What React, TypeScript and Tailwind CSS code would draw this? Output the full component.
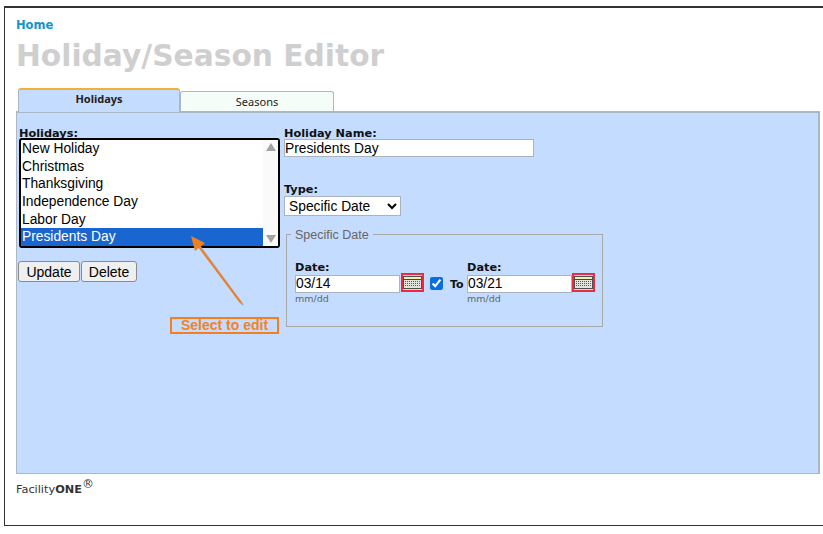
import React from 'react';

const holidays = ['New Holiday', 'Christmas', 'Thanksgiving', 'Independence Day', 'Labor Day', 'Presidents Day'];

const CalendarIcon = () => (
  <div className="w-[23px] h-[19px] border-2 border-[#ee2b3c] flex items-center justify-center shrink-0">
    <svg width="19" height="13" viewBox="0 0 19 13">
      <rect x="0.5" y="0.5" width="18" height="12" fill="#e4e4df" stroke="#4a4f4f" />
      <rect x="1" y="1" width="17" height="2" fill="#f3eeb4" />
      <rect x="1" y="3" width="17" height="1" fill="#3f4444" />
      {[5, 7, 9].map((y) =>
        [2, 4, 6, 8, 10, 12, 14, 16].map((x) => (
          <rect key={`${x}-${y}`} x={x} y={y} width="1" height="1" fill={x === 16 ? '#e33' : '#555'} />
        ))
      )}
    </svg>
  </div>
);

const DateField = ({ value }: { value: string }) => (
  <div className="flex flex-col">
    <label className="font-['DejaVu_Sans'] font-bold text-[11.3px] leading-[13px] text-[#111]">Date:</label>
    <div className="flex items-center h-[19px]">
      <input
        readOnly
        value={value}
        className="w-[105px] h-[18px] pt-px bg-white border border-[#a9b4c0] text-[13.8px] font-['Liberation_Sans'] text-black outline-none px-0"
      />
    </div>
    <span className="font-['DejaVu_Sans'] text-[9.5px] leading-[11px] text-[#666]">mm/dd</span>
  </div>
);

export default function App() {
  return (
    <div className="w-[823px] h-[534px] overflow-hidden bg-white pt-[6px] pl-[4px]">
      <div className="relative h-[520px] border-t-2 border-l border-b border-[#333] pl-[11px] pt-[11px] font-['DejaVu_Sans']">
        <a className="block font-bold text-[11.5px] leading-[13px] text-[#1296c8]">Home</a>
        <h1 className="mt-[5px] font-bold text-[29.7px] leading-[38px] text-[#cfcfcf] whitespace-nowrap">Holiday/Season Editor</h1>

        <div className="flex items-end h-[24px] mt-[12px] ml-[2px]">
          <div className="w-[162px] h-[24px] -mb-px z-10 bg-[#c4dcff] border-t-2 border-x border-t-[#f5ad3c] border-x-[#a9b8c4] rounded-t-[3px] text-center font-['Noto_Sans'] font-bold text-[11px] leading-[18px] text-[#222]">
            Holidays
          </div>
          <div className="w-[154px] h-[20px] bg-[#f4fdf8] border border-b-0 border-[#a9b8c4] rounded-t-[3px] text-center font-['Noto_Sans'] text-[11px] leading-[20px] text-[#222]">
            Seasons
          </div>
        </div>

        <div className="w-[804px] h-[363px] bg-[#c4dcff] border-t-2 border-l border-r-2 border-b border-[#a9b8c4] flex pl-[2px] pt-[14px]">
          <div className="w-[265px] shrink-0">
            <label className="block h-[11px] font-bold text-[11.3px] leading-[13px] text-[#111]">Holidays:</label>
            <div className="w-[261px] h-[110px] bg-white border-2 border-black rounded-[3px] flex overflow-hidden font-['Liberation_Sans'] text-[13.8px] text-black">
              <div className="flex-1 flex flex-col">
                {holidays.map((h) => (
                  <div
                    key={h}
                    className={`h-[17.7px] leading-[17.7px] pl-[1px] whitespace-nowrap ${h === 'Presidents Day' ? 'bg-[#1a66d0] text-white' : ''}`}
                  >
                    {h}
                  </div>
                ))}
              </div>
              <div className="w-[15px] bg-[#fafafa] flex flex-col items-center justify-between py-[3px]">
                <div className="w-0 h-0 border-x-[5px] border-x-transparent border-b-[8px] border-b-[#a3a3a3]" />
                <div className="w-0 h-0 border-x-[5px] border-x-transparent border-t-[8px] border-t-[#a3a3a3]" />
              </div>
            </div>
            <div className="flex gap-px mt-[13px] -ml-px font-['Liberation_Sans'] text-[14px] text-black">
              <button className="w-[62px] h-[21px] bg-[#efefef] border border-[#8a8a8a] rounded-[3px]">Update</button>
              <button className="w-[56px] h-[21px] bg-[#efefef] border border-[#8a8a8a] rounded-[3px]">Delete</button>
            </div>
          </div>

          <div className="flex flex-col">
            <label className="block h-[11px] font-bold text-[11.3px] leading-[13px] text-[#111]">Holiday Name:</label>
            <input
              readOnly
              value="Presidents Day"
              className="w-[250px] h-[18px] mt-px pt-[2px] bg-white border border-[#a9b4c0] font-['Liberation_Sans'] text-[13.8px] text-black outline-none"
            />
            <label className="block mt-[26px] h-[13px] font-bold text-[11.3px] leading-[13px] text-[#111]">Type:</label>
            <select className="w-[117px] h-[20px] bg-white border border-[#a9b4c0] font-['Liberation_Sans'] text-[13.8px] text-black outline-none">
              <option>Specific Date</option>
            </select>
            <div className="relative ml-[2px] mt-[18px] w-[317px] h-[93px] border border-[#a8a8a8] pl-[8px] pt-[26px]">
              <span className="absolute left-[4px] -top-[7px] px-[4px] bg-[#c4dcff] font-['Liberation_Sans'] text-[12.5px] leading-[14px] text-[#666]">
                Specific Date
              </span>
              <div className="flex items-start">
                <DateField value="03/14" />
                <div className="mt-[12px] ml-px"><CalendarIcon /></div>
                <input type="checkbox" defaultChecked className="w-[13px] h-[13px] mt-[16px] ml-[6px] accent-[#0b6ee0]" />
                <span className="mt-[17px] ml-[7px] w-[17px] font-bold text-[11px] leading-[13px] text-[#111]">To</span>
                <DateField value="03/21" />
                <div className="mt-[12px]"><CalendarIcon /></div>
              </div>
            </div>
          </div>
        </div>

        <div className="mt-[8px] h-[14px] text-[11.3px] leading-[14px] text-[#333] whitespace-nowrap">
          Facility<span className="font-bold">ONE</span><span className="relative -top-[5px] text-[12px]">®</span>
        </div>

        {/* annotation over the list */}
        <svg className="absolute left-[-5px] top-[-8px]" width="300" height="340" viewBox="0 0 300 340">
          <line x1="243" y1="305" x2="198" y2="244" stroke="#a9a9a9" strokeWidth="2" />
          <line x1="241" y1="303" x2="197" y2="244" stroke="#f0801f" strokeWidth="2" />
          <polygon points="191,236 205,243 195,251" fill="#f0801f" />
        </svg>
        <div className="absolute left-[165px] top-[309px] w-[109px] h-[17px] border-2 border-[#f57f1f] text-center font-['Liberation_Sans'] font-bold text-[14px] leading-[13px] text-[#f58220]">
          Select to edit
        </div>
      </div>
    </div>
  );
}
